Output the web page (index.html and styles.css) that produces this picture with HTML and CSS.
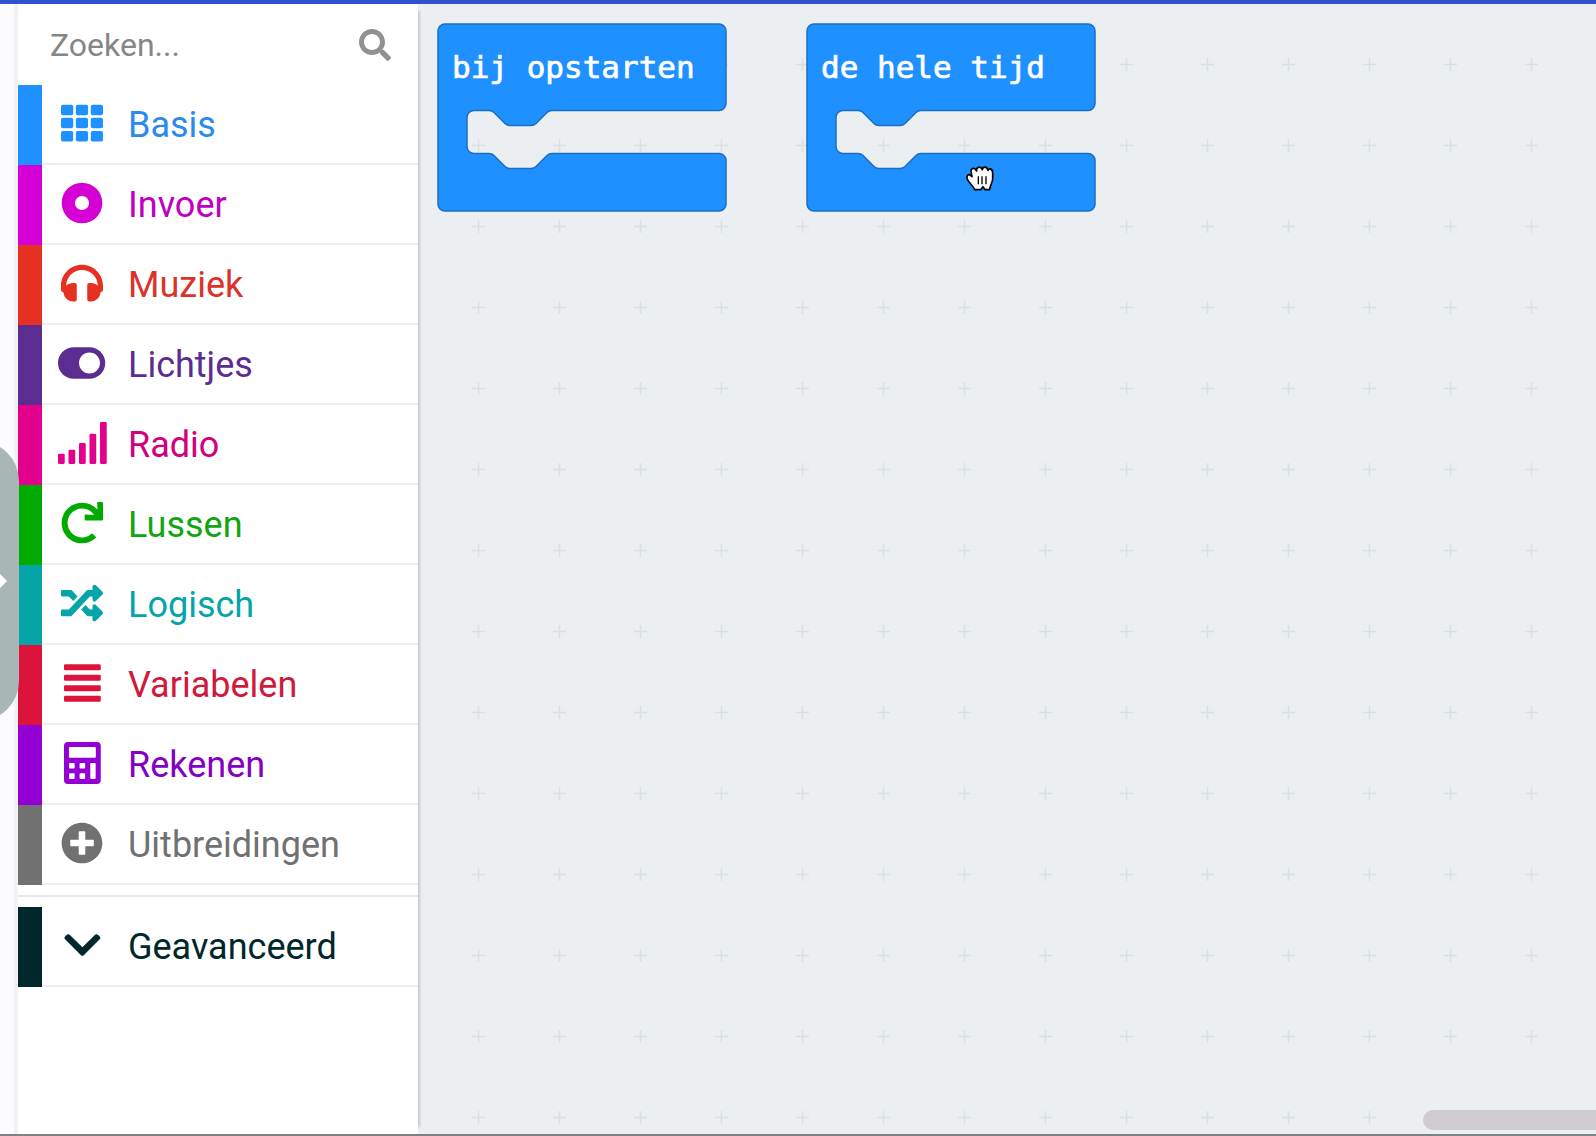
FILE: index.html
```html
<!DOCTYPE html>
<html lang="nl">
<head>
<meta charset="utf-8">
<meta name="viewport" content="width=device-width, initial-scale=1">
<title>Blokken-editor</title>
<link rel="stylesheet" href="styles.css">
</head>
<body>
<header class="topbar"></header>
<div class="editor">
  <div class="simulator">
    <button class="handle" type="button" aria-label="Simulator openen">
      <svg width="14" height="20" viewBox="0 0 14 20"><path d="M4 0L14 10L4 20Z" fill="#fff"/></svg>
    </button>
  </div>

  <aside class="toolbox">
    <form class="search">
      <input class="search-input" type="search" placeholder="Zoeken..." aria-label="Zoeken">
      <button class="search-button" type="button" aria-label="Zoeken">
        <svg width="32" height="32" viewBox="0 0 512 512"><path d="M505 442.7L405.3 343c-4.5-4.5-10.6-7-17-7H372c27.6-35.3 44-79.7 44-128C416 93.1 322.9 0 208 0S0 93.1 0 208s93.1 208 208 208c48.3 0 92.7-16.4 128-44v16.3c0 6.4 2.5 12.5 7 17l99.7 99.7c9.4 9.4 24.6 9.4 33.9 0l28.3-28.3c9.4-9.4 9.4-24.6.1-34zM208 336c-70.7 0-128-57.2-128-128 0-70.7 57.2-128 128-128 70.7 0 128 57.2 128 128 0 70.7-57.2 128-128 128z"/></svg>
      </button>
    </form>

    <nav class="categories">
      <button class="category basic" type="button"><span class="bar"></span><span class="row"><span class="icon"><svg height="42" viewBox="0 0 512 512"><g><rect x="0" y="32" width="149" height="128" rx="24"/><rect x="181" y="32" width="149" height="128" rx="24"/><rect x="363" y="32" width="149" height="128" rx="24"/><rect x="0" y="192" width="149" height="128" rx="24"/><rect x="181" y="192" width="149" height="128" rx="24"/><rect x="363" y="192" width="149" height="128" rx="24"/><rect x="0" y="352" width="149" height="128" rx="24"/><rect x="181" y="352" width="149" height="128" rx="24"/><rect x="363" y="352" width="149" height="128" rx="24"/></g></svg></span><span class="label">Basis</span></span></button>
      <button class="category input" type="button"><span class="bar"></span><span class="row"><span class="icon"><svg height="42" viewBox="0 0 512 512"><path fill-rule="evenodd" d="M256 8a248 248 0 1 0 0 496a248 248 0 1 0 0-496zM256 170a86 86 0 1 1 0 172a86 86 0 1 1 0-172z"/></svg></span><span class="label">Invoer</span></span></button>
      <button class="category music" type="button"><span class="bar"></span><span class="row"><span class="icon"><svg height="42" viewBox="0 0 512 512"><path d="M256 32C114.52 32 0 146.497 0 288v48a32 32 0 0 0 17.689 28.622l14.383 7.191C34.083 431.903 83.421 480 144 480h24c13.255 0 24-10.745 24-24V280c0-13.255-10.745-24-24-24h-24c-31.342 0-59.671 12.879-80 33.627V288c0-105.869 86.131-192 192-192s192 86.131 192 192v1.627C427.671 268.879 399.342 256 368 256h-24c-13.255 0-24 10.745-24 24v176c0 13.255 10.745 24 24 24h24c60.579 0 109.917-48.098 111.928-108.187l14.382-7.191A32 32 0 0 0 512 336v-48c0-141.479-114.496-256-256-256z"/></svg></span><span class="label">Muziek</span></span></button>
      <button class="category led" type="button"><span class="bar"></span><span class="row"><span class="icon"><svg height="42" viewBox="0 0 576 512"><path d="M384 64H192C86 64 0 150 0 256s86 192 192 192h192c106 0 192-86 192-192S490 64 384 64zm0 320c-70.8 0-128-57.3-128-128 0-70.8 57.3-128 128-128 70.8 0 128 57.3 128 128 0 70.8-57.3 128-128 128z"/></svg></span><span class="label">Lichtjes</span></span></button>
      <button class="category radio" type="button"><span class="bar"></span><span class="row"><span class="icon"><svg height="42" viewBox="0 0 576 512"><g><rect x="0" y="388" width="82" height="124" rx="14"/><rect x="128" y="338" width="82" height="174" rx="14"/><rect x="256" y="256" width="82" height="256" rx="14"/><rect x="384" y="144" width="82" height="368" rx="14"/><rect x="512" y="0" width="82" height="512" rx="14"/></g></svg></span><span class="label">Radio</span></span></button>
      <button class="category loops" type="button"><span class="bar"></span><span class="row"><span class="icon"><svg height="42" viewBox="0 0 512 512"><path d="M500.33 0h-47.41a12 12 0 0 0-12 12.57l4 82.76A247.42 247.42 0 0 0 256 8C119.34 8 7.9 119.53 8 256.19 8.1 393.07 119.1 504 256 504a247.1 247.1 0 0 0 166.18-63.91 12 12 0 0 0 .48-17.43l-34-34a12 12 0 0 0-16.38-.55A176 176 0 1 1 402.1 157.8l-101.53-4.87a12 12 0 0 0-12.57 12v47.41a12 12 0 0 0 12 12h200.33a12 12 0 0 0 12-12V12a12 12 0 0 0-12-12z"/></svg></span><span class="label">Lussen</span></span></button>
      <button class="category logic" type="button"><span class="bar"></span><span class="row"><span class="icon"><svg height="42" viewBox="0 0 512 512"><path d="M504.971 359.029c9.373 9.373 9.373 24.569 0 33.941l-80 79.984c-15.01 15.01-40.971 4.49-40.971-16.971V416h-58.785a12.004 12.004 0 0 1-8.773-3.812l-70.556-75.596 53.333-57.143L352 336h32v-39.981c0-21.438 25.943-31.998 40.971-16.971l80 79.981zM12 176h84l52.781 56.551 53.333-57.143-70.556-75.596A11.999 11.999 0 0 0 122.785 96H12c-6.627 0-12 5.373-12 12v56c0 6.627 5.373 12 12 12zm372 0v39.984c0 21.46 25.961 31.98 40.971 16.971l80-79.984c9.373-9.373 9.373-24.569 0-33.941l-80-79.981C409.943 24.021 384 34.582 384 56.019V96h-58.785a12.004 12.004 0 0 0-8.773 3.812L96 336H12c-6.627 0-12 5.373-12 12v56c0 6.627 5.373 12 12 12h110.785c3.326 0 6.503-1.381 8.773-3.812L352 176h32z"/></svg></span><span class="label">Logisch</span></span></button>
      <button class="category variables" type="button"><span class="bar"></span><span class="row"><span class="icon"><svg height="42" viewBox="0 0 448 512"><g><rect y="26" width="448" height="74" rx="16"/><rect y="155" width="448" height="74" rx="16"/><rect y="283" width="448" height="74" rx="16"/><rect y="412" width="448" height="74" rx="16"/></g></svg></span><span class="label">Variabelen</span></span></button>
      <button class="category math" type="button"><span class="bar"></span><span class="row"><span class="icon"><svg height="42" viewBox="0 0 448 512"><path fill-rule="evenodd" d="M48 0H400Q448 0 448 48V464Q448 512 400 512H48Q0 512 0 464V48Q0 0 48 0ZM72 60Q60 60 60 72V180Q60 192 72 192H376Q388 192 388 180V72Q388 60 376 60ZM72 256H120Q130 256 130 266V314Q130 324 120 324H72Q62 324 62 314V266Q62 256 72 256ZM200 256H248Q258 256 258 266V314Q258 324 248 324H200Q190 324 190 314V266Q190 256 200 256ZM72 382H120Q130 382 130 392V440Q130 450 120 450H72Q62 450 62 440V392Q62 382 72 382ZM200 382H248Q258 382 258 392V440Q258 450 248 450H200Q190 450 190 440V392Q190 382 200 382ZM330 256H376Q386 256 386 266V440Q386 450 376 450H330Q320 450 320 440V266Q320 256 330 256Z"/></svg></span><span class="label">Rekenen</span></span></button>
      <button class="category extensions" type="button"><span class="bar"></span><span class="row"><span class="icon"><svg height="42" viewBox="0 0 512 512"><path d="M256 8C119 8 8 119 8 256s111 248 248 248 248-111 248-248S393 8 256 8zm144 276c0 6.6-5.4 12-12 12h-92v92c0 6.6-5.4 12-12 12h-56c-6.600 0-12-5.400-12-12v-92h-92c-6.600 0-12-5.400-12-12v-56c0-6.600 5.400-12 12-12h92v-92c0-6.600 5.400-12 12-12h56c6.600 0 12 5.400 12 12v92h92c6.600 0 12 5.400 12 12v56z"/></svg></span><span class="label">Uitbreidingen</span></span></button>
      <hr class="divider">
      <button class="category advanced" type="button"><span class="bar"></span><span class="row"><span class="icon"><svg height="42" viewBox="0 0 448 512"><path d="M207.029 381.476L12.686 187.132c-9.373-9.373-9.373-24.569 0-33.941l22.667-22.667c9.357-9.357 24.522-9.375 33.901-.04L224 284.505l154.745-154.021c9.379-9.335 24.544-9.317 33.901.04l22.667 22.667c9.373 9.373 9.373 24.569 0 33.941L240.971 381.476c-9.373 9.372-24.569 9.372-33.942 0z"/></svg></span><span class="label">Geavanceerd</span></span></button>
    </nav>
  </aside>

  <main class="workspace">
    <svg class="grid" width="100%" height="100%" aria-hidden="true">
      <defs><pattern id="crosses" width="81" height="81" patternUnits="userSpaceOnUse"><path d="M54 60.5h13M60.5 54v13" stroke="#dadfe0" stroke-width="1.500"/></pattern></defs>
      <rect width="100%" height="100%" fill="url(#crosses)"/>
    </svg>
    <svg class="block on-start" width="288" height="187" viewBox="0 0 288 187">
      <path class="block-shape" d="M7 0H281a7 7 0 0 1 7 7V79.500a7 7 0 0 1-7 7H114c-2 0-4 1-5 2l-11 11c-1 1-3 2-5 2H72c-2 0-4-1-5-2l-11-11c-1-1-3-2-5-2H36a7 7 0 0 0-7 7v29a7 7 0 0 0 7 7H51c2 0 4 1 5 2l11 11c1 1 3 2 5 2H93c2 0 4-1 5-2l11-11c1-1 3-2 5-2H281a7 7 0 0 1 7 7V180a7 7 0 0 1-7 7H7a7 7 0 0 1-7-7V7a7 7 0 0 1 7-7Z"/>
      <text class="block-text" x="14" y="54">bij opstarten</text>
    </svg>
    <svg class="block forever" width="288" height="187" viewBox="0 0 288 187">
      <path class="block-shape" d="M7 0H281a7 7 0 0 1 7 7V79.500a7 7 0 0 1-7 7H114c-2 0-4 1-5 2l-11 11c-1 1-3 2-5 2H72c-2 0-4-1-5-2l-11-11c-1-1-3-2-5-2H36a7 7 0 0 0-7 7v29a7 7 0 0 0 7 7H51c2 0 4 1 5 2l11 11c1 1 3 2 5 2H93c2 0 4-1 5-2l11-11c1-1 3-2 5-2H281a7 7 0 0 1 7 7V180a7 7 0 0 1-7 7H7a7 7 0 0 1-7-7V7a7 7 0 0 1 7-7Z"/>
      <text class="block-text" x="14" y="54">de hele tijd</text>
    </svg>
    <svg class="hand" width="28" height="26" viewBox="0 0 84 78" aria-hidden="true">
      <path d="M26 71C23 60 10 52 4 40C0 30 6 23 13 28L18 32L15 17C14 7 25 4 29 11L32 15C30 2 44-1 49 11C50 1 63 0 66 13C69 6 80 8 80 20V38C80 50 72 56 71 71H57L51 62L44 71Z" fill="#fff" stroke="#000" stroke-width="5" stroke-linejoin="round"/>
      <path d="M37 31V55M48 31V55M60 31V55" stroke="#000" stroke-width="4"/>
    </svg>
    <div class="scrollbar"></div>
  </main>
</div>
<footer class="bottombar"></footer>
</body>
</html>
```
FILE: styles.css
```css
* {
  box-sizing: border-box;
}

body {
  margin: 0;
  min-height: 100vh;
  display: flex;
  flex-direction: column;
  overflow-x: hidden;
  background: #fff;
  font-family: Roboto, "Liberation Sans", sans-serif;
}

button,
input {
  margin: 0;
  padding: 0;
  border: 0;
  background: none;
  color: inherit;
  font: inherit;
}

button {
  cursor: pointer;
}

svg {
  display: block;
  overflow: visible;
  fill: currentColor;
}

.topbar {
  height: 4px;
  background: #3152d0;
}

.bottombar {
  height: 2px;
  background: #808184;
}

.editor {
  flex: 1;
  display: flex;
  position: relative;
}

/* Collapsed simulator */
.simulator {
  flex: none;
  width: 18px;
  background: #fcfcff;
  border-right: 4px solid #f2f2f4;
}

.handle {
  position: absolute;
  z-index: 3;
  top: 437px;
  left: -71px;
  width: 90px;
  height: 280px;
  padding-left: 64px;
  border-radius: 40px;
  background: #a9b6b6;
}

/* Toolbox */
.toolbox {
  flex: none;
  width: 400px;
  position: relative;
  z-index: 2;
  background: #fff;
  box-shadow: 8px 0 3px -7px rgba(0, 0, 0, 0.25);
}

.search {
  height: 81px;
  padding: 0 27px 0 32px;
  display: flex;
  align-items: center;
  color: #919191;
}

.search-input {
  flex: 1;
  min-width: 0;
  height: 48px;
  outline: 0;
  font-size: 32px;
}

.search-input::placeholder {
  color: #868686;
  opacity: 1;
}

.categories {
  display: flex;
  flex-direction: column;
}

.category {
  height: 80px;
  display: flex;
  text-align: left;
}

.bar {
  width: 24px;
  align-self: stretch;
  background: currentColor;
}

.row {
  flex: 1;
  align-self: stretch;
  display: flex;
  align-items: center;
  gap: 6px;
  border-bottom: 2px solid #eeeef0;
}

.icon {
  width: 80px;
  padding-bottom: 2px;
  display: flex;
  justify-content: center;
}

.label {
  padding-top: 2px;
  font-size: 36px;
  line-height: 48px;
}

.divider {
  width: 100%;
  height: 2px;
  margin: 10px 0;
  border: 0;
  background: #e6e6e8;
}

.basic { color: #1e90ff; }
.input { color: #d400d4; }
.music { color: #e63022; }
.led { color: #5c2d91; }
.radio { color: #e3008c; }
.loops { color: #00aa00; }
.logic { color: #04a4a8; }
.variables { color: #dc143c; }
.math { color: #9400d3; }
.extensions { color: #717171; }
.advanced { color: #00272a; }

.basic .label { color: #2c8bea; }
.input .label { color: #bf00c2; }
.music .label { color: #db3229; }
.radio .label { color: #d0007f; }
.loops .label { color: #12a412; }
.variables .label { color: #cf1a3c; }
.math .label { color: #8500c2; }

/* Workspace: blocks sit on a free canvas */
.workspace {
  flex: 1;
  min-width: 0;
  position: relative;
  overflow: hidden;
  background: #ebeff2;
}

.grid {
  position: absolute;
  inset: 0;
}

.block {
  position: absolute;
  top: 20px;
}

.on-start {
  left: 20px;
}

.forever {
  left: 389px;
}

.block-shape {
  fill: #1e90ff;
  stroke: #1a6fc4;
  stroke-width: 1.5;
}

.block-text {
  fill: #fff;
  stroke: #fff;
  stroke-width: 0.7;
  font-family: "DejaVu Sans Mono", monospace;
  font-size: 31px;
}

.hand {
  position: absolute;
  left: 548px;
  top: 162px;
}

.scrollbar {
  position: absolute;
  right: -10px;
  bottom: 4px;
  width: 183px;
  height: 20px;
  border-radius: 10px;
  background: #cfccd0;
}
```
